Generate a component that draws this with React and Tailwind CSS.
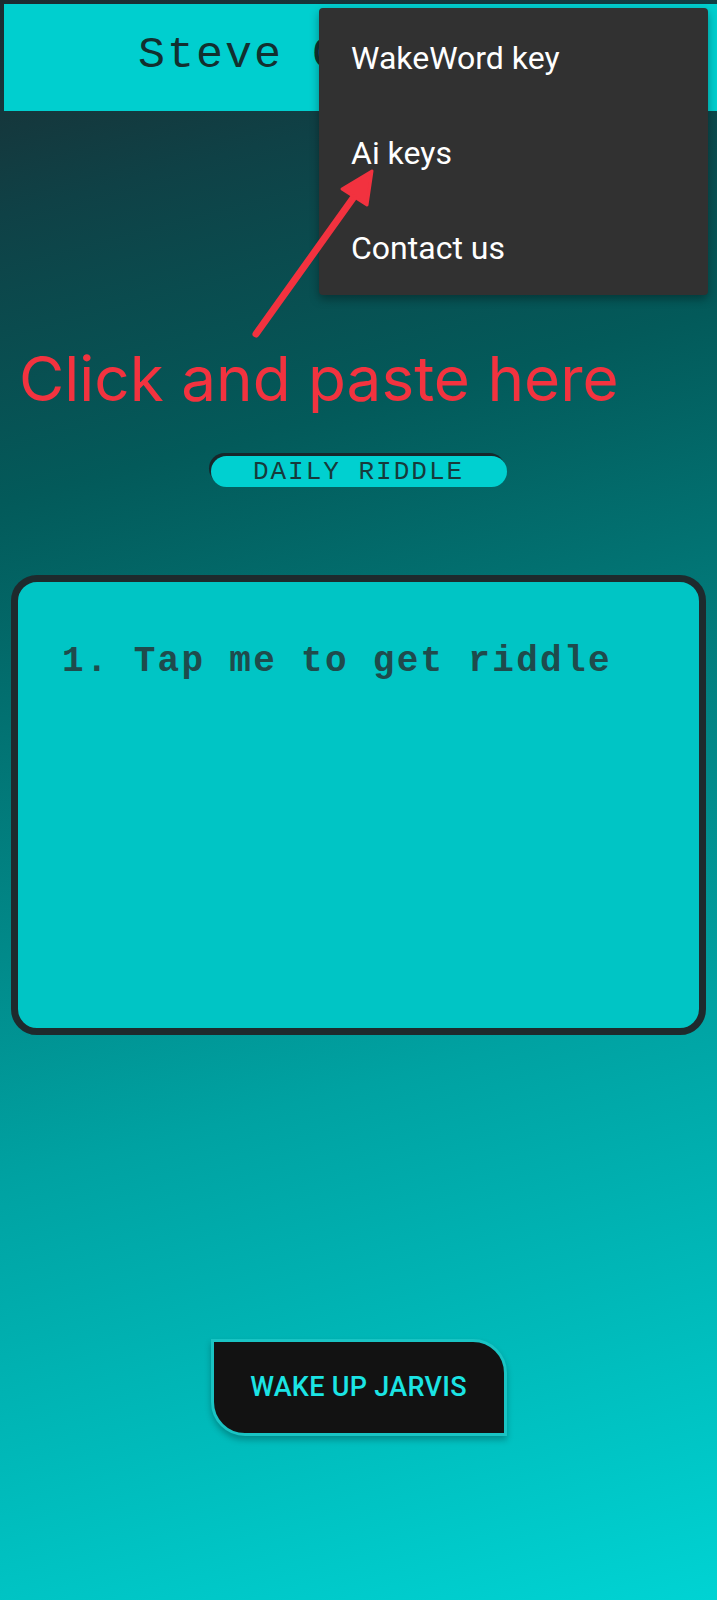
import React from "react";

const MENU = ["WakeWord key", "Ai keys", "Contact us"];

function Arrow() {
  return (
    <svg
      className="absolute left-0 top-0 pointer-events-none"
      width="717"
      height="400"
      viewBox="0 0 717 400"
    >
      <line
        x1="256"
        y1="334"
        x2="356"
        y2="194"
        stroke="#f2323f"
        strokeWidth="7"
        strokeLinecap="round"
      />
      <polygon points="372,171 342,189 367,205" fill="#f2323f" stroke="#f2323f" strokeWidth="3" strokeLinejoin="round" />
    </svg>
  );
}

export default function App() {
  return (
    <div className="relative w-[717px] h-[1600px] overflow-hidden bg-[linear-gradient(165deg,#1c2c31_0%,#0f4146_12%,#035a5a_28%,#00a2a2_66%,#00d3d3_100%)]">
      {/* top bar */}
      <div className="pt-[4px] pl-[4px]">
        <div className="h-[107px] bg-[#00cfcf] flex items-center pl-[134px] pb-[4px] overflow-hidden">
          <span className="font-['Liberation_Mono',monospace] text-[45px] tracking-[2px] text-[#12302f] whitespace-nowrap">
            Steve C
          </span>
        </div>
      </div>

      {/* annotation text */}
      <div className="mt-[237px] pl-[19px] font-['Inter',sans-serif] text-[62px] leading-none text-[#f2333f] whitespace-nowrap">
        Click and paste here
      </div>

      {/* pill */}
      <div className="mt-[46px] flex justify-center">
        <div className="w-[296px] h-[31px] rounded-full bg-[#00d0d0] shadow-[-2px_-3px_0_0_#17272b] flex items-center justify-center">
          <span className="font-['Liberation_Mono',monospace] text-[26px] leading-none tracking-[2px] text-[#173a3b]">
            DAILY RIDDLE
          </span>
        </div>
      </div>

      {/* riddle card */}
      <div className="mt-[88px] mx-[11px] h-[460px] rounded-[26px] border-[7px] border-[#1e2a2d] bg-[#00c5c5] pl-[44px] pt-[53px]">
        <p className="font-['Liberation_Mono',monospace] text-[36px] font-semibold tracking-[2.3px] text-[#1f4b4c] whitespace-nowrap">
          1. Tap me to get riddle
        </p>
      </div>

      {/* wake button */}
      <div className="mt-[304px] flex justify-center">
        <button className="w-[296px] h-[97px] bg-[#121212] border-[3px] border-[#19c4c4] rounded-tr-[34px] rounded-bl-[34px] shadow-[0_4px_6px_rgba(0,0,0,0.25)] flex items-center justify-center">
          <span className="font-['Roboto',sans-serif] text-[27px] tracking-[0.3px] font-medium text-[#1be4e4]">
            WAKE UP JARVIS
          </span>
        </button>
      </div>

      {/* overflow menu */}
      <div className="absolute top-[8px] left-[319px] w-[389px] h-[287px] bg-[#313131] rounded-[4px] shadow-[0_4px_10px_rgba(0,0,0,0.35)] pt-[2px]">
        {MENU.map((m) => (
          <div
            key={m}
            className="h-[95px] flex items-center pl-[32px] font-['Roboto',sans-serif] text-[32px] text-white"
          >
            {m}
          </div>
        ))}
      </div>

      <Arrow />
    </div>
  );
}
